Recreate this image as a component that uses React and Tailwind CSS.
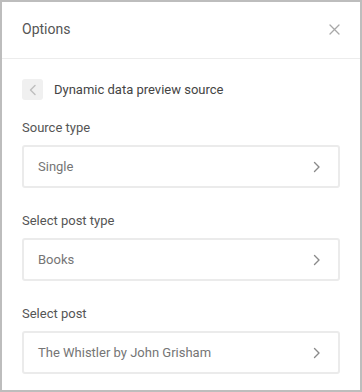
import React from 'react';

function Chevron({ dir = 'right', className = '' }) {
  const d = dir === 'right' ? 'M1.5 1.5l4.5 4.5-4.5 4.5' : 'M6 1.5L1.5 6 6 10.5';
  return (
    <svg width="8" height="12" viewBox="0 0 8 12" className={className} fill="none">
      <path d={d} stroke="currentColor" strokeWidth="1.4" strokeLinecap="round" strokeLinejoin="round" />
    </svg>
  );
}

function SelectBox({ value }) {
  return (
    <button className="w-full h-[43px] flex items-center justify-between pl-[14px] pr-[17px] border-2 border-[#ebebeb] rounded-[3px] bg-white text-left">
      <span className="text-[13px] text-[#757575]">{value}</span>
      <Chevron className="text-[#8a8a8a]" />
    </button>
  );
}

function Field({ label, value }) {
  return (
    <div className="flex flex-col">
      <div className="text-[13px] text-[#555] leading-[18px] mb-[8px]">{label}</div>
      <SelectBox value={value} />
    </div>
  );
}

export default function App() {
  return (
    <div
      className="w-[362px] h-[392px] bg-white border-2 border-[#bdbdbd] flex flex-col"
      style={{ fontFamily: 'Roboto, "Liberation Sans", sans-serif' }}
    >
      <div className="h-[57px] flex items-center justify-between pl-[20px] pr-[20px] pb-[1px] border-b border-[#ececec] shrink-0">
        <span className="text-[14px] text-[#555]">Options</span>
        <svg width="11" height="11" viewBox="0 0 11 11" className="text-[#a8a8a8]">
          <path d="M1 1l9 9M10 1l-9 9" stroke="currentColor" strokeWidth="1.3" strokeLinecap="round" />
        </svg>
      </div>
      <div className="px-[20px] pt-[20px] flex flex-col">
        <div className="flex items-center gap-[11px]">
          <div className="w-[21px] h-[21px] rounded-[3px] bg-[#f0f0f0] flex items-center justify-center">
            <Chevron dir="left" className="text-[#bdbdbd]" />
          </div>
          <span className="text-[13px] text-[#444]">Dynamic data preview source</span>
        </div>
        <div className="flex flex-col gap-[24px] mt-[19px]">
          <Field label="Source type" value="Single" />
          <Field label="Select post type" value="Books" />
          <Field label="Select post" value="The Whistler by John Grisham" />
        </div>
      </div>
    </div>
  );
}
